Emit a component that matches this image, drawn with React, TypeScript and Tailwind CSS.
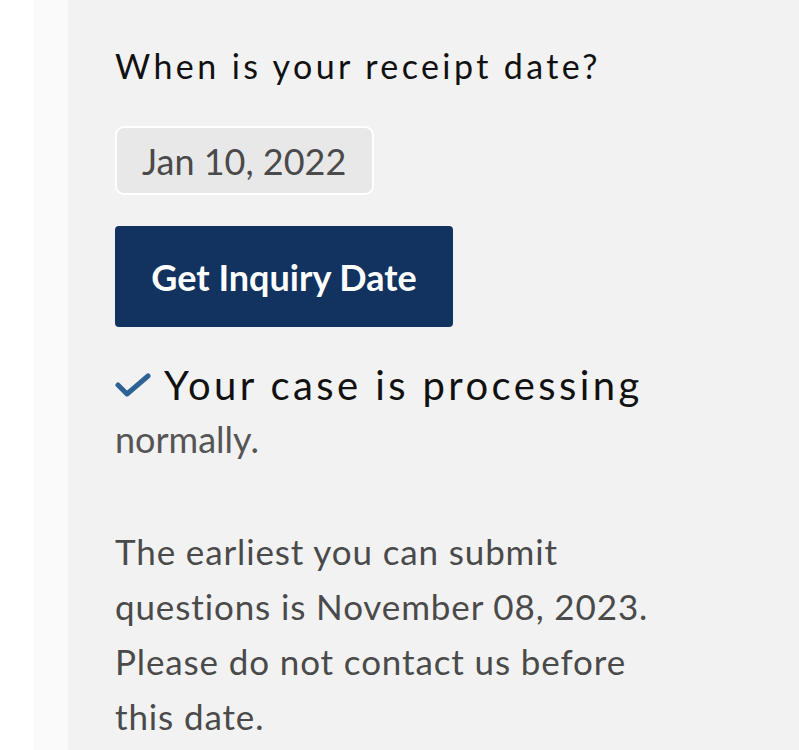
export default function App() {
  return (
    <div className="flex min-h-[750px] w-full bg-white" style={{ fontFamily: "Lato, 'Liberation Sans', sans-serif" }}>
      <div className="w-[34px] shrink-0 bg-white" />
      <div className="w-[34px] shrink-0 bg-[#fafafa]" />
      <main className="flex-1 bg-[#f2f2f2] pl-[47px] pt-[44px]">
        <h1 className="text-[34px] leading-[44px] tracking-[0.1em] text-[#111]">When is your receipt date?</h1>

        <div className="mt-[38px] flex h-[69px] w-[259px] items-center rounded-[9px] border-2 border-white bg-[#e8e8e8] pl-[25px] text-[36px] text-[#4a4a4a]">
          Jan 10, 2022
        </div>

        <button className="mt-[31px] flex h-[101px] w-[338px] items-center justify-center rounded-[4px] bg-[#12325f] text-[36px] font-bold text-white">
          Get Inquiry Date
        </button>

        <div className="mt-[34px] flex items-center">
          <svg width="36" height="26" viewBox="0 0 36 26" className="mr-[13px]">
            <path d="M3 13 L12 22 L33 4" fill="none" stroke="#2d6394" strokeWidth="5" strokeLinecap="round" strokeLinejoin="round" />
          </svg>
          <span className="text-[40px] leading-[48px] tracking-[0.085em] text-[#111]">Your case is processing</span>
        </div>
        <p className="mt-[8px] text-[36px] leading-[44px] text-[#555]">normally.</p>

        <p className="mt-[63px] w-[550px] text-[35px] leading-[55px] tracking-[0.025em] text-[#4a4a4a]">
          The earliest you can submit questions is November 08, 2023. Please do not contact us before this date.
        </p>
      </main>
    </div>
  );
}
